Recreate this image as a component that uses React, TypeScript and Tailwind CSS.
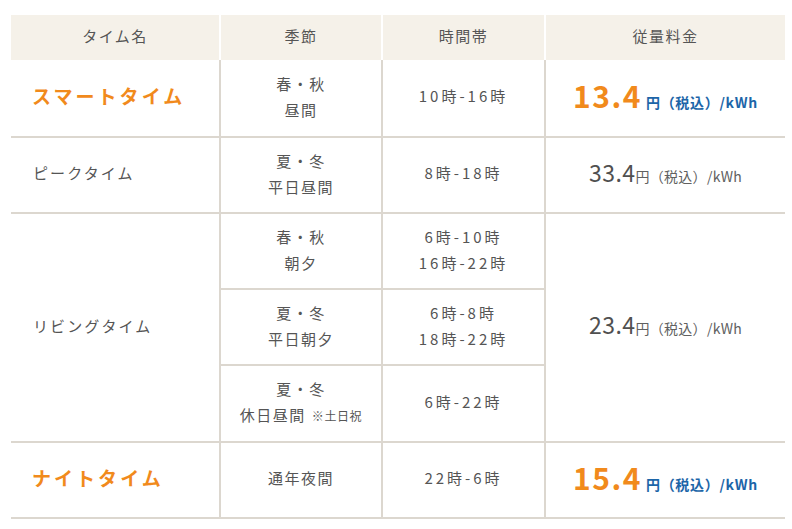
import React from "react";

const F = { fontFamily: '"Noto Sans CJK JP", "Noto Sans", sans-serif' };

function Price({ value, hi }: { value: string; hi?: boolean }) {
  if (hi) {
    return (
      <div className="flex items-baseline justify-center font-bold">
        <span className="text-[30px] leading-none text-[#f18a1c]">{value}</span>
        <span className="ml-[4px] text-[14px] tracking-[0.05em] text-[#1c65a8]">円（税込）/kWh</span>
      </div>
    );
  }
  return (
    <div className="flex items-baseline justify-center text-[#505050]">
      <span className="text-[23px] leading-none tracking-[0.02em]">{value}</span>
      <span className="text-[14px] tracking-[0.02em] text-[#606060]">円（税込）/kWh</span>
    </div>
  );
}

const cellB = "border-b-2 border-[#dcd7cf] pb-[3px]";
const cellL = "border-l-2 border-[#dcd7cf]";

export default function App() {
  return (
    <div className="bg-white w-[792px] h-[529px] pt-[15px] pl-[11px]" style={F}>
      <div className="grid grid-cols-[208px_162px_163px_241px] grid-rows-[45px_78px_76px_76px_76px_77px_76px] text-[15px] text-[#555] tracking-[0.1em]">
        {/* header */}
        <div className="bg-[#f5f1e9] flex items-center justify-center pb-[2px]">タイム名</div>
        <div className="bg-[#f5f1e9] flex items-center justify-center pb-[2px] border-l-2 border-white">季節</div>
        <div className="bg-[#f5f1e9] flex items-center justify-center pb-[2px] border-l-2 border-white">時間帯</div>
        <div className="bg-[#f5f1e9] flex items-center justify-center pb-[2px] border-l-2 border-white">従量料金</div>

        {/* smart */}
        <div className={`${cellB} flex items-center pl-[21px] text-[19px] font-bold tracking-[0.16em] text-[#f18a1c]`}>スマートタイム</div>
        <div className={`${cellB} ${cellL} flex flex-col items-center justify-center leading-[26px]`}>
          <span>春・秋</span>
          <span>昼間</span>
        </div>
        <div className={`${cellB} ${cellL} flex items-center justify-center tracking-[0.2em]`}>10時-16時</div>
        <div className={`${cellB} ${cellL} flex items-center justify-center`}>
          <Price value="13.4" hi />
        </div>

        {/* peak */}
        <div className={`${cellB} flex items-center pl-[22px] tracking-[0.14em]`}>ピークタイム</div>
        <div className={`${cellB} ${cellL} flex flex-col items-center justify-center leading-[26px]`}>
          <span>夏・冬</span>
          <span>平日昼間</span>
        </div>
        <div className={`${cellB} ${cellL} flex items-center justify-center tracking-[0.2em]`}>8時-18時</div>
        <div className={`${cellB} ${cellL} flex items-center justify-center`}>
          <Price value="33.4" />
        </div>

        {/* living */}
        <div className={`${cellB} row-span-3 flex items-center pl-[22px] tracking-[0.14em]`}>リビングタイム</div>
        <div className={`${cellB} ${cellL} flex flex-col items-center justify-center leading-[26px]`}>
          <span>春・秋</span>
          <span>朝夕</span>
        </div>
        <div className={`${cellB} ${cellL} flex flex-col items-center justify-center leading-[26px] tracking-[0.2em]`}>
          <span>6時-10時</span>
          <span>16時-22時</span>
        </div>
        <div className={`${cellB} ${cellL} row-span-3 flex items-center justify-center`}>
          <Price value="23.4" />
        </div>
        <div className={`${cellB} ${cellL} flex flex-col items-center justify-center leading-[26px]`}>
          <span>夏・冬</span>
          <span>平日朝夕</span>
        </div>
        <div className={`${cellB} ${cellL} flex flex-col items-center justify-center leading-[26px] tracking-[0.2em]`}>
          <span>6時-8時</span>
          <span>18時-22時</span>
        </div>
        <div className={`${cellB} ${cellL} flex flex-col items-center justify-center leading-[26px]`}>
          <span>夏・冬</span>
          <span>
            休日昼間<span className="ml-[6px] text-[12px] tracking-[0.05em]">※土日祝</span>
          </span>
        </div>
        <div className={`${cellB} ${cellL} flex items-center justify-center tracking-[0.2em]`}>6時-22時</div>

        {/* night */}
        <div className={`${cellB} flex items-center pl-[21px] text-[19px] font-bold tracking-[0.16em] text-[#f18a1c]`}>ナイトタイム</div>
        <div className={`${cellB} ${cellL} flex items-center justify-center`}>通年夜間</div>
        <div className={`${cellB} ${cellL} flex items-center justify-center tracking-[0.2em]`}>22時-6時</div>
        <div className={`${cellB} ${cellL} flex items-center justify-center`}>
          <Price value="15.4" hi />
        </div>
      </div>
    </div>
  );
}
